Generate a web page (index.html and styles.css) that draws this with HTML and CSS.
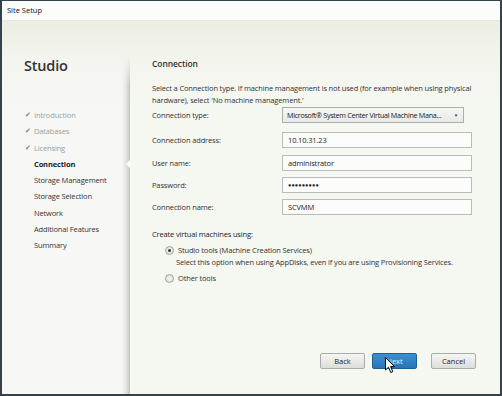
FILE: index.html
```html
<!DOCTYPE html>
<html lang="en">

<head>
    <meta charset="UTF-8">
    <title>Site Setup</title>
    <link rel="stylesheet" href="styles.css">
</head>

<body>

    <div class="window">
        <div class="titlebar">Site Setup</div>

        <div class="content">
            <div class="sidebar">
                <h1 class="brand">Studio</h1>
                <ul class="steps">
                    <li class="done"><span class="tick">&#10004;</span>Introduction</li>
                    <li class="done"><span class="tick">&#10004;</span>Databases</li>
                    <li class="done"><span class="tick">&#10004;</span>Licensing</li>
                    <li class="current">Connection</li>
                    <li>Storage Management</li>
                    <li>Storage Selection</li>
                    <li>Network</li>
                    <li>Additional Features</li>
                    <li>Summary</li>
                </ul>
            </div>

            <div class="divider">
                <span class="notch"></span>
            </div>

            <div class="main">
                <h2 class="page-title">Connection</h2>
                <p class="intro">Select a Connection type. If machine management is not used (for example when using physical hardware), select 'No machine management.'</p>

                <div class="form">
                    <div class="field-row">
                        <label>Connection type:</label>
                        <div class="select">
                            <span class="select-text">Microsoft&reg; System Center Virtual Machine Mana...</span>
                            <span class="caret">&#9660;</span>
                        </div>
                    </div>
                    <div class="field-row gap-9">
                        <label>Connection address:</label>
                        <div class="input">10.10.31.23</div>
                    </div>
                    <div class="field-row gap-7">
                        <label>User name:</label>
                        <div class="input">administrator</div>
                    </div>
                    <div class="field-row gap-6">
                        <label>Password:</label>
                        <div class="input password">&#9679;&#9679;&#9679;&#9679;&#9679;&#9679;&#9679;&#9679;&#9679;</div>
                    </div>
                    <div class="field-row gap-6">
                        <label>Connection name:</label>
                        <div class="input">SCVMM</div>
                    </div>
                </div>

                <div class="vm-section">
                    <div class="section-label">Create virtual machines using:</div>
                    <div class="radio-row">
                        <span class="radio checked"></span>
                        <span>Studio tools (Machine Creation Services)</span>
                    </div>
                    <div class="radio-note">Select this option when using AppDisks, even if you are using Provisioning Services.</div>
                    <div class="radio-row">
                        <span class="radio"></span>
                        <span>Other tools</span>
                    </div>
                </div>

                <div class="buttons">
                    <button class="btn">Back</button>
                    <button class="btn btn-primary">Next</button>
                    <button class="btn btn-cancel">Cancel</button>
                    <svg class="cursor" width="11" height="17" viewBox="0 0 11 17">
                        <path d="M0.5 0.5 L0.5 13 L3.5 10.2 L5.8 15.5 L7.8 14.6 L5.6 9.6 L9.5 9.6 Z" fill="#fff" stroke="#000" stroke-width="1"/>
                    </svg>
                </div>
            </div>
        </div>
    </div>

</body>

</html>
```

FILE: styles.css
```css
body {
    margin: 0;
    padding: 0;
    font-family: "Open Sans", "Noto Sans", sans-serif;
    color: #222;
}

.window {
    width: 502px;
    height: 396px;
    box-sizing: border-box;
    border: 2px solid #34424c;
    border-top-width: 1px;
    display: flex;
    flex-direction: column;
    background-color: #f4f6f0;
}

.titlebar {
    height: 19px;
    line-height: 19px;
    padding-left: 5px;
    font-size: 7.5px;
    color: #111;
    background-color: #fbfdfb;
    border-bottom: 1px solid #e6e9e0;
}

.content {
    flex: 1;
    display: flex;
    background: linear-gradient(to bottom, #eceee3 0px, #f2f4ec 30px, #f5f7f1 80px);
}

.sidebar {
    width: 120px;
    padding-left: 22px;
    box-sizing: border-box;
    background: linear-gradient(to bottom, #eceee3 0px, #f4f5f0 40px, #f7f8f5 90px);
}

.brand {
    margin: 35px 0 0 0;
    font-size: 14.5px;
    font-weight: 600;
    color: #333;
    letter-spacing: -0.2px;
}

.steps {
    list-style: none;
    margin: 32px 0 0 0;
    padding: 0;
}

.steps li {
    height: 16.3px;
    line-height: 16.3px;
    font-size: 7.5px;
    color: #333;
    padding-left: 10px;
    letter-spacing: -0.15px;
    position: relative;
}

.steps li.done {
    color: #9a9e9b;
}

.steps li.current {
    font-weight: 700;
    color: #222;
}

.tick {
    position: absolute;
    left: 1px;
    font-size: 7px;
    color: #7f8480;
}

.divider {
    width: 8px;
    margin-top: 35px;
    background: linear-gradient(to right, rgba(220, 223, 220, 0), #e2e5e2 50%, #cdd0ce 85%, #c3c6c4);
    -webkit-mask-image: linear-gradient(to bottom, transparent 0px, #000 30px);
    mask-image: linear-gradient(to bottom, transparent 0px, #000 30px);
    position: relative;
}

.notch {
    position: absolute;
    right: 0;
    top: 104px;
    width: 0;
    height: 0;
    border-top: 4px solid transparent;
    border-bottom: 4px solid transparent;
    border-right: 4px solid #fbfcfb;
}

.main {
    flex: 1;
    padding: 0 26px 0 22px;
    display: flex;
    flex-direction: column;
    font-size: 7.5px;
    letter-spacing: -0.15px;
    color: #333;
}

.page-title {
    margin: 37px 0 0 0;
    font-size: 8.5px;
    font-weight: 600;
    color: #333;
    letter-spacing: -0.1px;
}

.intro {
    margin: 13px 0 0 0;
    line-height: 12px;
}

.form {
    margin-top: 1px;
    display: flex;
    flex-direction: column;
}

.field-row {
    display: flex;
    align-items: center;
    height: 16px;
}

.gap-9 {
    margin-top: 9px;
}

.gap-7 {
    margin-top: 7px;
}

.gap-6 {
    margin-top: 6px;
}

.field-row label {
    width: 130px;
}

.input,
.select {
    height: 16px;
    box-sizing: border-box;
    border: 1px solid #b9bcb8;
    background-color: #fcfdfb;
    padding-left: 5px;
    line-height: 14px;
    color: #222;
}

.input {
    width: 190px;
}

.password {
    font-size: 5.5px;
    letter-spacing: 0.1px;
}

.select {
    width: 182px;
    display: flex;
    justify-content: space-between;
    padding-left: 4px;
    padding-right: 5px;
    background: linear-gradient(to bottom, #f7f8f6, #e7e9e6);
    border-color: #acafab;
    white-space: nowrap;
}

.select-text {
    font-size: 7.2px;
    letter-spacing: -0.3px;
}

.caret {
    font-size: 4.5px;
    color: #444;
    margin-left: 3px;
}

.vm-section {
    margin-top: 14px;
}

.section-label {
    color: #222;
}

.radio-row {
    display: flex;
    align-items: center;
    margin-top: 6px;
    margin-left: 13px;
    gap: 4px;
}

.radio {
    width: 7px;
    height: 7px;
    border-radius: 50%;
    border: 1px solid #9da19d;
    background: radial-gradient(circle, #f3f4f2, #d9dcd8);
    position: relative;
}

.radio.checked::after {
    content: "";
    position: absolute;
    left: 2px;
    top: 2px;
    width: 3px;
    height: 3px;
    border-radius: 50%;
    background-color: #333;
}

.radio-note {
    margin-left: 24px;
    margin-top: 2px;
    margin-bottom: 4px;
}

.buttons {
    margin-top: auto;
    margin-bottom: 25px;
    margin-right: -2px;
    display: flex;
    justify-content: flex-end;
    position: relative;
}

.btn {
    width: 45px;
    height: 16px;
    padding: 0;
    font-family: "Open Sans", "Noto Sans", sans-serif;
    font-size: 7.5px;
    color: #222;
    border: 1px solid #a9aca8;
    border-radius: 2px;
    background: linear-gradient(to bottom, #f6f6f4, #dcdedb);
    margin-left: 7px;
}

.btn-primary {
    background: linear-gradient(to bottom, #3d8fd1, #2a74b6);
    border-color: #1f5f98;
    color: #e8f2fb;
}

.btn-cancel {
    margin-left: 14px;
}

.cursor {
    position: absolute;
    left: 233px;
    top: 4px;
}
```
